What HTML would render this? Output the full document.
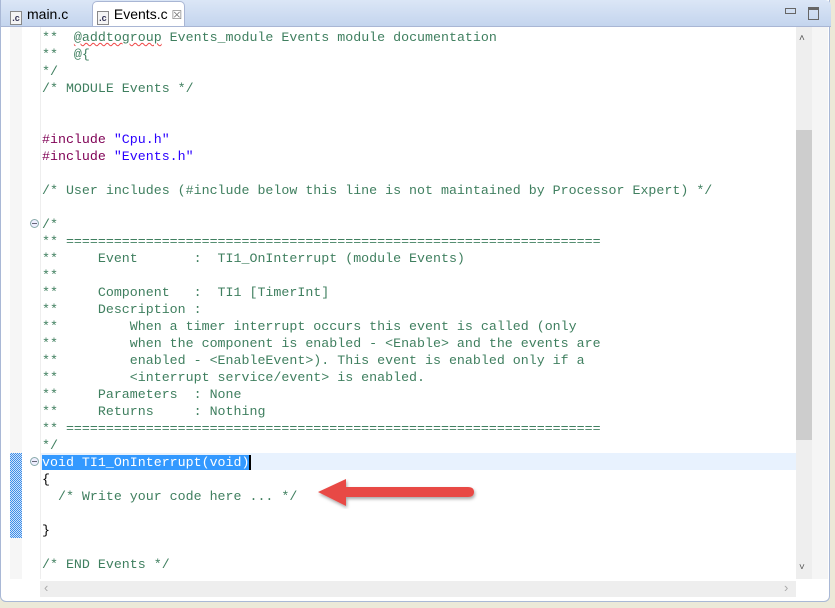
<!DOCTYPE html>
<html><head><meta charset="utf-8"><style>
body{margin:0;width:835px;height:608px;background:#ece9d8;position:relative;overflow:hidden;font-family:"Liberation Sans",sans-serif}
.win{position:absolute;left:0;top:0;width:830px;height:602px;background:#fff;border:1px solid #a9b8d6;border-top:none;border-radius:0 0 6px 6px;box-sizing:border-box}
.tabbar{position:absolute;left:0;top:0;width:830px;height:26px;background:linear-gradient(#dbe6f6,#c4d5ee);border-bottom:1px solid #a9b6d4;border-radius:0 6px 0 0}
.tab{position:absolute;top:3px;height:23px;font-size:14px;color:#000;line-height:22px}
.tab1{left:9px}
.tab2{left:91px;width:93px;top:1px;height:25px;background:#fff;border:1px solid #a9b6d4;border-bottom:none;border-radius:5px 5px 0 0;box-sizing:border-box;line-height:24px}
.ic{display:inline-block;width:12px;height:14px;border:1px solid #888;font-size:9px;line-height:13px;text-align:center;vertical-align:-2px;margin-right:5px;background:#f4f4f4;font-weight:bold;color:#335;box-sizing:border-box}
.gut1{position:absolute;left:10px;top:27px;width:12px;height:552px;background:#f6f6f6}
.gut2{position:absolute;left:40px;top:27px;width:1px;height:552px;background:#eee}
.code{position:absolute;left:42px;top:29px;font-family:"Liberation Mono",monospace;font-size:13.3px;line-height:17px;white-space:pre;color:#3f7f5f}
.k{color:#7f0055}.s{color:#2a00ff}.b{color:#000}
.cur{position:absolute;left:41px;top:453px;width:755px;height:17px;background:#e8f2fe}
.sel{background:#3399ff;color:#fff}
.vs{position:absolute;left:796px;top:27px;width:16px;height:552px;background:#eee}
.vs2{position:absolute;left:812px;top:27px;width:16px;height:552px;background:#f5f5f5}
.thumb{position:absolute;left:796px;top:130px;width:16px;height:310px;background:#cdcdcd}
.hs{position:absolute;left:40px;top:581px;width:756px;height:16px;background:#eee}
.mark{position:absolute;left:10px;top:453px;width:12px;height:85px;background-color:#3d8ee8;background-image:repeating-conic-gradient(#3d8ee8 0 25%,#cfe2fa 0 50%);background-size:2px 2px}
.fold{position:absolute;left:30px;width:9px;height:9px;border:1px solid #8aa;border-radius:50%;box-sizing:border-box;background:#eef}
.fold:after{content:"";position:absolute;left:1px;top:3px;width:5px;height:1px;background:#667}
</style></head><body>
<div class="win">
<div class="tabbar">
 <div class="tab tab1"><span class="ic">.c</span>main.c</div>
 <div class="tab tab2">&nbsp;<span class="ic">.c</span>Events.c <span style="color:#777;font-size:12px">&#x2612;</span></div>
 <div style="position:absolute;left:784px;top:8px;width:9px;height:4px;border:1px solid #666"></div>
 <div style="position:absolute;left:807px;top:7px;width:9px;height:9px;border:1px solid #666;border-top-width:3px"></div>
</div>
</div>
<div class="gut1"></div><div class="gut2"></div>
<div class="cur"></div>
<div class="mark"></div>
<div class="fold" style="top:219px"></div>
<div class="fold" style="top:457px"></div>
<div class="code">**  <span style="text-decoration:underline wavy #e44;text-decoration-thickness:1px">@addtogroup</span> Events_module Events module documentation
**  @{
*/
/* MODULE Events */


<span class="k">#include</span> <span class="s">"Cpu.h"</span>
<span class="k">#include</span> <span class="s">"Events.h"</span>

/* User includes (#include below this line is not maintained by Processor Expert) */

/*
** ===================================================================
**     Event       :  TI1_OnInterrupt (module Events)
**
**     Component   :  TI1 [TimerInt]
**     Description :
**         When a timer interrupt occurs this event is called (only
**         when the component is enabled - &lt;Enable&gt; and the events are
**         enabled - &lt;EnableEvent&gt;). This event is enabled only if a
**         &lt;interrupt service/event&gt; is enabled.
**     Parameters  : None
**     Returns     : Nothing
** ===================================================================
*/
<span class="sel">void TI1_OnInterrupt(void)</span><span style="border-left:2px solid #000"></span>
<span class="b">{</span>
  /* Write your code here ... */

<span class="b">}</span>

/* END Events */</div>
<div class="vs"></div><div class="vs2"></div><div class="thumb"></div>
<div style="position:absolute;left:799px;top:33px;color:#555;font-size:10px">&#x2C4;</div>
<div style="position:absolute;left:799px;top:562px;color:#555;font-size:10px">&#x2C5;</div>
<div class="hs"></div>
<div style="position:absolute;left:44px;top:580px;color:#aaa;font-size:13px">&#x2039;</div>
<div style="position:absolute;left:784px;top:580px;color:#aaa;font-size:13px">&#x203A;</div>
<svg style="position:absolute;left:310px;top:475px" width="170" height="36">
<defs><filter id="sh"><feDropShadow dx="1" dy="2" stdDeviation="1.5" flood-color="#000" flood-opacity="0.35"/></filter></defs>
<g filter="url(#sh)" fill="#e84a45">
<path d="M8 17 L36 4 L36 12 L158 12 Q164 12 164 17 Q164 22 158 22 L36 22 L36 31 Z"/>
</g></svg>
</body></html>
